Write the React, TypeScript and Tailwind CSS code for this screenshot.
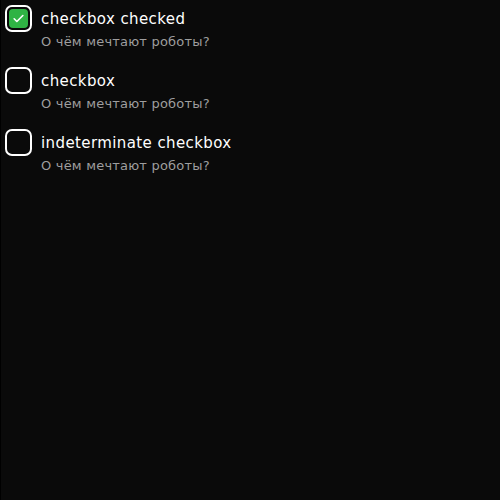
import React, { useState } from 'react';

type Item = {
  label: string;
  checked: boolean;
};

const ITEMS: Item[] = [
  { label: 'checkbox checked', checked: true },
  { label: 'checkbox', checked: false },
  { label: 'indeterminate checkbox', checked: false },
];

function Checkbox({ checked, onClick }: { checked: boolean; onClick: () => void }) {
  return (
    <button
      onClick={onClick}
      className="w-[27px] h-[27px] shrink-0 rounded-[7px] border-2 border-white p-[2px] flex"
    >
      {checked && (
        <span className="flex-1 rounded-[4px] bg-[#2fb344] flex items-center justify-center">
          <svg width="13" height="13" viewBox="0 0 24 24" fill="none" stroke="white" strokeWidth="3" strokeLinecap="round" strokeLinejoin="round">
            <path d="M4 12.5l5 5L20 6.5" />
          </svg>
        </span>
      )}
    </button>
  );
}

export default function App() {
  const [items, setItems] = useState(ITEMS);

  const toggle = (label: string) => {
    setItems(prev => prev.map(i => (i.label === label ? { ...i, checked: !i.checked } : i)));
  };

  return (
    <div className="w-[500px] h-[500px] bg-[#0a0a0a] border-l border-black p-[4px] pt-[5px] flex flex-col gap-[16px] font-['DejaVu_Sans',sans-serif]">
      {items.map(item => (
        <div key={item.label} className="flex items-start gap-[9px]">
          <Checkbox checked={item.checked} onClick={() => toggle(item.label)} />
          <div className="flex flex-col">
            <span className="text-[15px] leading-[28px] tracking-[0.4px] text-white">{item.label}</span>
            <span className="text-[13px] leading-[18px] tracking-[0.2px] text-[#9e9e9e]">О чём мечтают роботы?</span>
          </div>
        </div>
      ))}
    </div>
  );
}
